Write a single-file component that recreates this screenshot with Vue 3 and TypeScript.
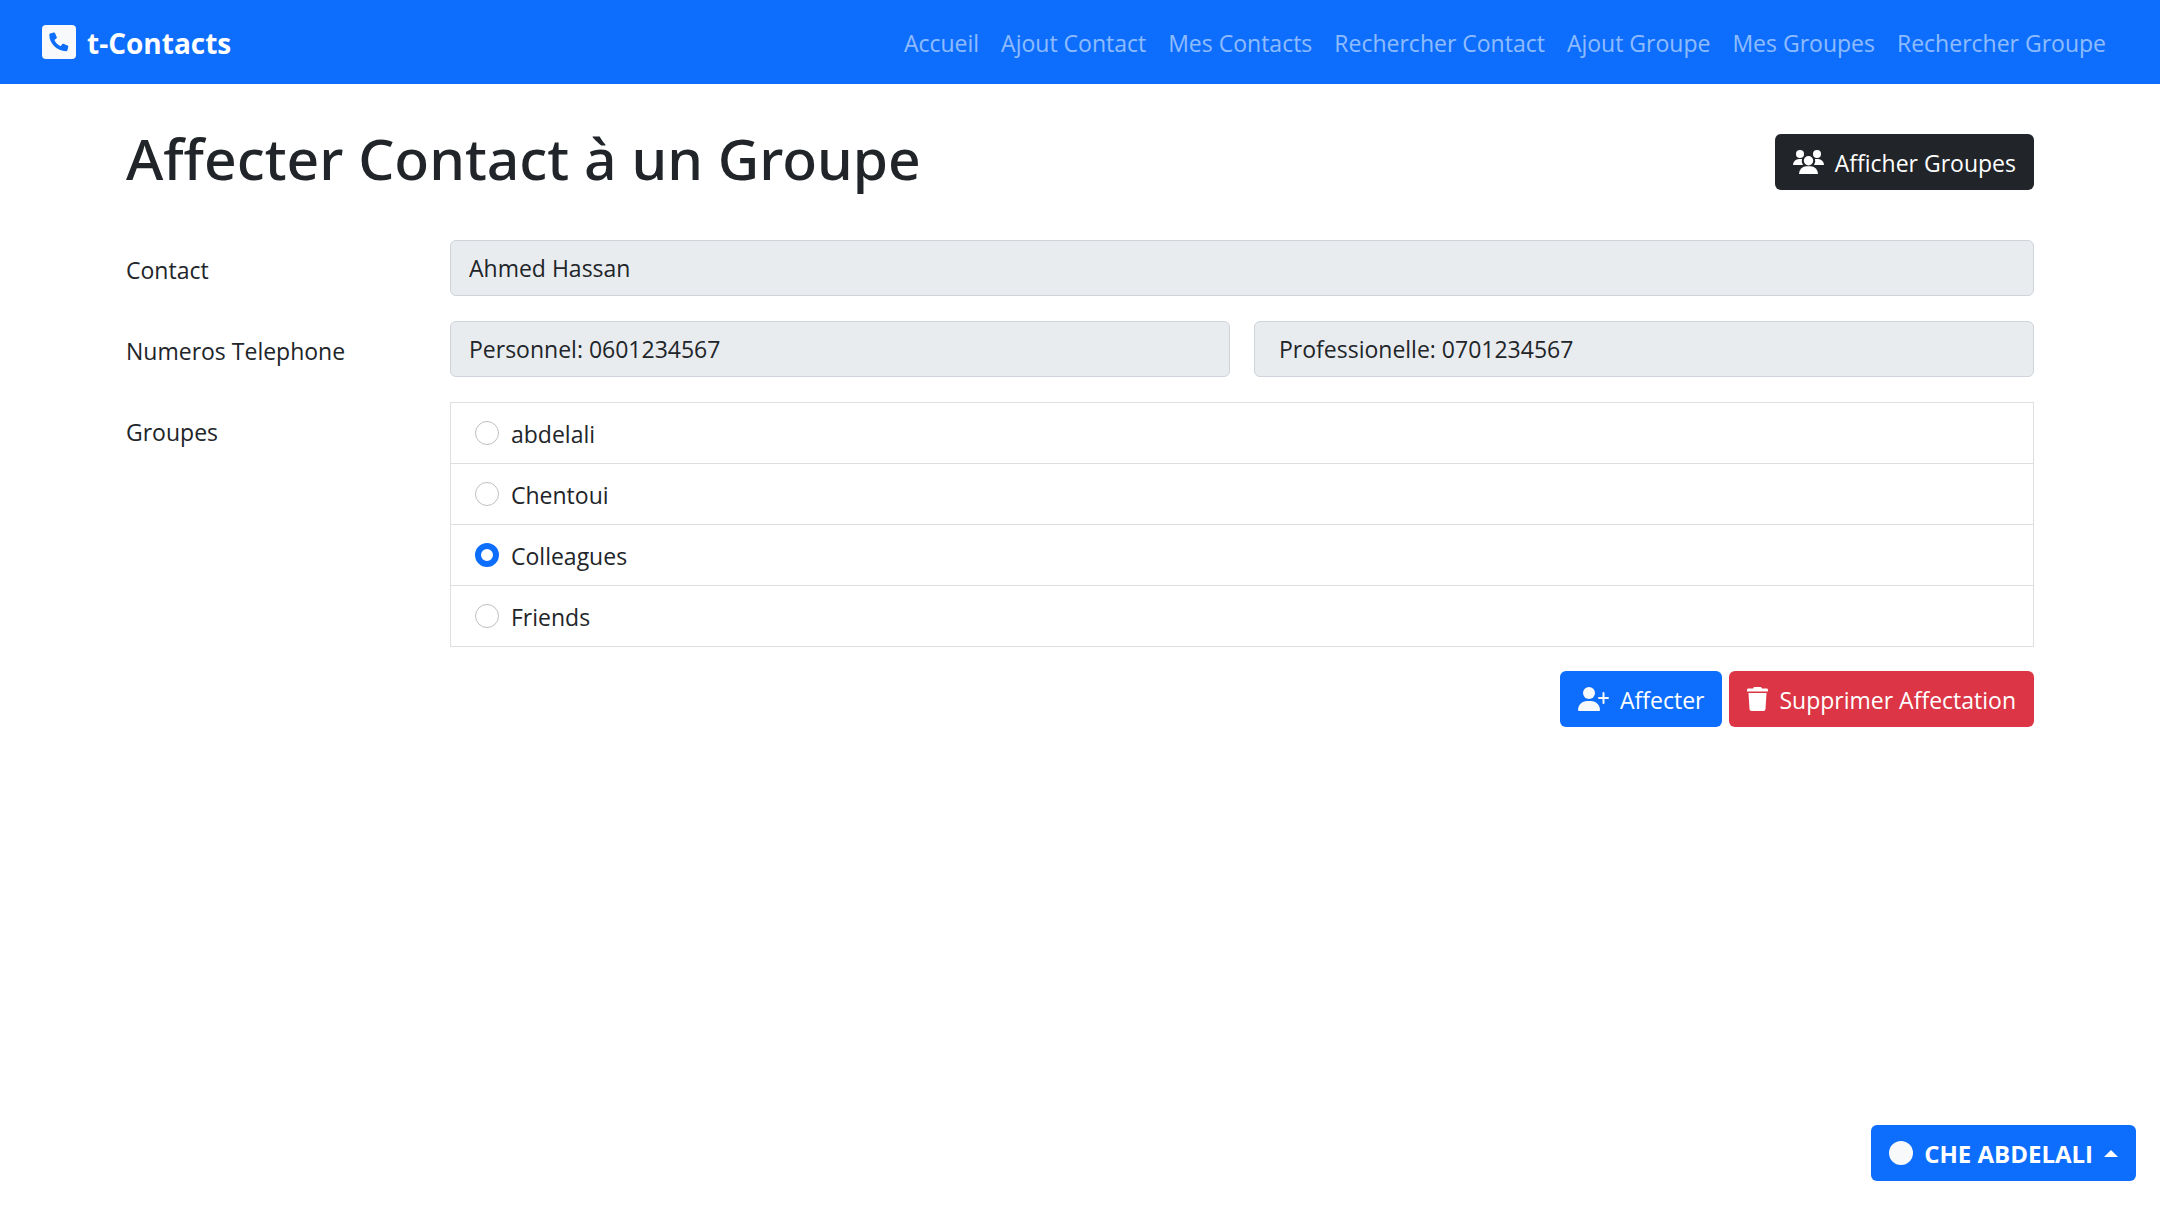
<script setup lang="ts">
import { ref } from 'vue'

interface NavLink {
  label: string
  href: string
}

const links: NavLink[] = [
  { label: 'Accueil', href: '#accueil' },
  { label: 'Ajout Contact', href: '#ajout-contact' },
  { label: 'Mes Contacts', href: '#contacts' },
  { label: 'Rechercher Contact', href: '#recherche-contact' },
  { label: 'Ajout Groupe', href: '#ajout-groupe' },
  { label: 'Mes Groupes', href: '#groupes' },
  { label: 'Rechercher Groupe', href: '#recherche-groupe' },
]

const groups: string[] = ['abdelali', 'Chentoui', 'Colleagues', 'Friends']
const selected = ref('Colleagues')
</script>

<template>
  <div class="page">
    <header class="navbar">
      <a class="brand" href="#accueil">
        <svg class="brand-icon" viewBox="0 0 34 34" aria-hidden="true">
          <path fill="#f8f9fa" fill-rule="evenodd" d="M4 0h26a4 4 0 0 1 4 4v26a4 4 0 0 1-4 4H4a4 4 0 0 1-4-4V4a4 4 0 0 1 4-4zM8.300 8.400C7.700 8.500 7.300 9 7.300 9.600C7.300 18.900 15.100 26 24 26.200C24.700 26.200 25.200 25.800 25.400 25.200L26.300 21.800C26.400 21.200 26.200 20.700 25.600 20.400L21.800 18.900C21.200 18.700 20.600 18.800 20.200 19.300L18.600 21.200C15.800 19.900 13.700 17.800 12.400 15L14.300 13.500C14.800 13.100 15 12.400 14.700 11.900L13.100 8.200C12.900 7.600 12.300 7.300 11.700 7.500z" />
        </svg>
        <span class="text">t-Contacts</span>
      </a>
      <nav class="nav">
        <a v-for="link in links" :key="link.href" class="nav-link text" :href="link.href">{{ link.label }}</a>
      </nav>
    </header>

    <main class="container">
      <div class="heading">
        <h1>Affecter Contact à un Groupe</h1>
        <button class="btn btn-dark" type="button">
          <svg class="icon-users" viewBox="0 0 31 24" aria-hidden="true">
            <g fill="currentColor">
              <circle cx="7" cy="4" r="4" />
              <circle cx="24" cy="4" r="4" />
              <path d="M0 15a6 6 0 0 1 6-6h3a7 7 0 0 0 1 6zM31 15a6 6 0 0 0-6-6h-3a7 7 0 0 1-1 6z" />
              <circle cx="15.500" cy="10.700" r="4.700" />
              <path d="M6 24a7.500 7.700 0 0 1 7.500-7.700h4A7.500 7.700 0 0 1 25 24z" />
            </g>
          </svg>
          <span class="text">Afficher Groupes</span>
        </button>
      </div>

      <form class="form" @submit.prevent>
        <div class="fields">
          <div class="row">
            <label class="label" for="contact">Contact</label>
            <input id="contact" class="control" type="text" value="Ahmed Hassan" readonly />
          </div>

          <div class="row">
            <label class="label" for="phone-personal">Numeros Telephone</label>
            <div class="pair">
              <input id="phone-personal" class="control" type="text" value="Personnel: 0601234567" readonly />
              <input class="control control-wide" type="text" value="Professionelle: 0701234567" aria-label="Numero professionnel" readonly />
            </div>
          </div>

          <div class="row">
            <span id="groups-label" class="label">Groupes</span>
            <ul class="list" role="radiogroup" aria-labelledby="groups-label">
              <li v-for="group in groups" :key="group" class="item">
                <input :id="`group-${group}`" v-model="selected" class="radio" type="radio" name="group" :value="group" />
                <label class="text" :for="`group-${group}`">{{ group }}</label>
              </li>
            </ul>
          </div>
        </div>

        <div class="actions">
          <button class="btn btn-primary" type="submit">
            <svg class="icon-add" viewBox="0 0 31 24" aria-hidden="true">
              <g fill="#f8f9fa">
                <circle cx="11" cy="6" r="6" />
                <path d="M0 23c0-5 4-9 9-9h4c5 0 9 4 9 9a1 1 0 0 1-1 1H1a1 1 0 0 1-1-1z" />
                <path d="M25.500 5q1 0 1 1v4h3.500q1 0 1 1t-1 1h-3.500v4q0 1-1 1t-1-1v-4H21q-1 0-1-1t1-1h3.500V6q0-1 1-1z" />
              </g>
            </svg>
            <span class="text">Affecter</span>
          </button>
          <button class="btn btn-danger" type="button">
            <svg class="icon-trash" viewBox="0 0 21 24" aria-hidden="true">
              <path fill="#fff" d="M7 0h7l1 1.500h5q1 0 1 1.500v1.500H0V3q0-1.500 1-1.500h5zM1.500 6h18l-1 16q-.1 2-2 2h-12q-1.900 0-2-2z" />
            </svg>
            <span class="text">Supprimer Affectation</span>
          </button>
        </div>
      </form>
    </main>

    <button class="btn btn-primary account" type="button" aria-haspopup="true">
      <span class="avatar"></span>
      <span class="text">CHE ABDELALI</span>
      <span class="caret"></span>
    </button>
  </div>
</template>

<style>
body {
  margin: 0;
  background: #fff;
}
</style>

<style scoped>
.page {
  min-height: 100vh;
  color: #212529;
  font-family: "Segoe UI", "Open Sans", "Noto Sans", sans-serif;
  font-size: 23px;
  line-height: 36px;
}

.page *,
.page *::before {
  box-sizing: border-box;
}

.text {
  padding-top: 2px;
}

.navbar {
  display: flex;
  align-items: center;
  justify-content: space-between;
  height: 84px;
  padding: 0 42px;
  background: #0d6efd;
}

.brand {
  display: flex;
  align-items: center;
  gap: 11px;
  color: #fff;
  font-size: 28px;
  font-weight: 700;
  text-decoration: none;
}

.brand-icon {
  width: 34px;
  height: 34px;
}

.nav {
  display: flex;
  gap: 22px;
  padding: 0 12px;
}

.nav-link {
  color: rgba(255, 255, 255, 0.55);
  text-decoration: none;
}

.container {
  max-width: 1908px;
  margin: 0 auto;
  padding: 42px 0;
}

.heading {
  display: flex;
  align-items: center;
  justify-content: space-between;
  margin-bottom: 42px;
}

h1 {
  margin: 0 0 8px;
  font-family: "Segoe UI", "Noto Sans", sans-serif;
  font-size: 57px;
  font-weight: 500;
  line-height: 64px;
}

.btn {
  display: inline-flex;
  align-items: center;
  height: 56px;
  padding: 0 18px;
  border: 0;
  border-radius: 6px;
  color: #fff;
  font: inherit;
  gap: 11px;
  cursor: pointer;
}

.btn-dark {
  background: #212529;
}

.btn-primary {
  background: #0d6efd;
}

.btn-danger {
  background: #dc3545;
}

.icon-users,
.icon-add {
  width: 31px;
  height: 24px;
}

.icon-trash {
  width: 21px;
  height: 24px;
}

.form {
  display: flex;
  flex-direction: column;
  gap: 24px;
}

.fields {
  display: grid;
  gap: 25px;
}

.row {
  display: grid;
  grid-template-columns: 324px 1fr;
}

.label {
  padding-top: 12px;
}

.pair {
  display: grid;
  grid-template-columns: 1fr 1fr;
  gap: 24px;
}

.control {
  width: 100%;
  height: 56px;
  padding: 0 18px;
  border: 1px solid #ced4da;
  border-radius: 6px;
  background: #e9ecef;
  color: #212529;
  font: inherit;
  outline: 0;
}

.control-wide {
  padding: 0 24px;
}

.list {
  margin: 0;
  padding: 0;
  border: 1px solid #dfdfdf;
  border-bottom: 0;
  list-style: none;
}

.item {
  display: flex;
  align-items: center;
  gap: 12px;
  height: 61px;
  padding: 0 24px;
  border-bottom: 1px solid #dfdfdf;
}

.radio {
  width: 24px;
  height: 24px;
  margin: 0;
  border: 1px solid #bfbfbf;
  border-radius: 50%;
  background: #fff;
  appearance: none;
}

.radio:checked {
  border: 6px solid #0d6efd;
}

.actions {
  display: flex;
  justify-content: flex-end;
  gap: 7px;
}

.account {
  position: fixed;
  right: 24px;
  bottom: 24px;
  font-size: 24px;
  font-weight: 700;
}

.avatar {
  width: 24px;
  height: 24px;
  border-radius: 50%;
  background: #f8f9fa;
}

.caret {
  border: 7px solid transparent;
  border-top: 0;
  border-bottom-color: #fff;
}
</style>
